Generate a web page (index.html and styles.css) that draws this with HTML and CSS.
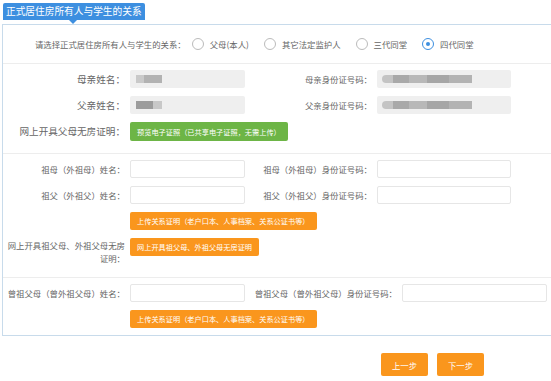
FILE: index.html
```html
<!DOCTYPE html>
<html lang="zh-CN">
<head>
    <meta charset="UTF-8">
    <meta name="viewport" content="width=device-width, initial-scale=1.0">
    <title>正式居住房所有人与学生的关系</title>
    <link rel="stylesheet" href="styles.css">
</head>
<body>
    <div class="page">
        <!-- Title tab -->
        <div class="tab">正式居住房所有人与学生的关系</div>

        <div class="panel">
            <!-- Relation choice -->
            <div class="radio-row">
                <span class="radio-label">请选择正式居住房所有人与学生的关系：</span>
                <label class="radio"><span class="dot"></span>父母(本人)</label>
                <label class="radio"><span class="dot"></span>其它法定监护人</label>
                <label class="radio"><span class="dot"></span>三代同堂</label>
                <label class="radio checked"><span class="dot"></span>四代同堂</label>
            </div>

            <!-- Parents -->
            <div class="section grid">
                <div class="label big">母亲姓名：</div>
                <div class="field filled"><span class="blur name"></span></div>
                <div class="label">母亲身份证号码：</div>
                <div class="field filled"><span class="blur idno"></span></div>

                <div class="label big">父亲姓名：</div>
                <div class="field filled"><span class="blur name dark"></span></div>
                <div class="label">父亲身份证号码：</div>
                <div class="field filled"><span class="blur idno"></span></div>

                <div class="label big">网上开具父母无房证明：</div>
                <div class="wide"><button class="btn green">预览电子证照（已共享电子证照，无需上传）</button></div>
            </div>

            <!-- Grandparents -->
            <div class="section grid">
                <div class="label">祖母（外祖母）姓名：</div>
                <div class="field"></div>
                <div class="label">祖母（外祖母）身份证号码：</div>
                <div class="field"></div>

                <div class="label">祖父（外祖父）姓名：</div>
                <div class="field"></div>
                <div class="label">祖父（外祖父）身份证号码：</div>
                <div class="field"></div>

                <div class="label"></div>
                <div class="wide"><button class="btn orange">上传关系证明（老户口本、人事档案、关系公证书等）</button></div>

                <div class="label multi">网上开具祖父母、外祖父母无房证明：</div>
                <div class="wide"><button class="btn orange">网上开具祖父母、外祖父母无房证明</button></div>
            </div>

            <!-- Great grandparents -->
            <div class="section grid last">
                <div class="label">曾祖父母（曾外祖父母）姓名：</div>
                <div class="field"></div>
                <div class="label">曾祖父母（曾外祖父母）身份证号码：</div>
                <div class="field"></div>

                <div class="label"></div>
                <div class="wide"><button class="btn orange">上传关系证明（老户口本、人事档案、关系公证书等）</button></div>
            </div>
        </div>

        <div class="steps">
            <button class="btn orange step">上一步</button>
            <button class="btn orange step">下一步</button>
        </div>
    </div>
</body>
</html>
```

FILE: styles.css
```css
html, body {
    margin: 0;
    overflow: hidden;
    background-color: #fff;
}
body {
    font-family: "Microsoft YaHei", "Noto Sans CJK SC", sans-serif;
    font-size: 8.4px;
    color: #666;
}
.page {
    padding: 3px 0 0 2px;
}
.tab {
    position: relative;
    display: inline-block;
    height: 17px;
    line-height: 17px;
    padding: 0 3px;
    margin-left: 1px;
    background-color: #3d8fe0;
    color: #fff;
    font-size: 9.7px;
    border-radius: 2px 2px 0 0;
}
.tab::after {
    content: "";
    position: absolute;
    left: 66px;
    top: 17px;
    border-left: 4px solid transparent;
    border-right: 4px solid transparent;
    border-top: 4px solid #3d8fe0;
}
.panel {
    margin-top: 4px;
    width: 570px;
    border: 1px solid #c8dbeb;
}
.radio-row {
    display: flex;
    align-items: center;
    height: 38px;
    padding-left: 32px;
    border-bottom: 1px solid #ededed;
}
.radio-label {
    margin-right: 6px;
}
.radio {
    display: flex;
    align-items: center;
    margin-right: 15px;
}
.dot {
    width: 10px;
    height: 10px;
    margin-right: 6px;
    border: 1px solid #bbb;
    border-radius: 50%;
    display: flex;
    align-items: center;
    justify-content: center;
}
.radio.checked .dot {
    border-color: #3d8fe0;
}
.radio.checked .dot::before {
    content: "";
    width: 4px;
    height: 4px;
    border-radius: 50%;
    background-color: #3d8fe0;
}
.section {
    border-bottom: 1px solid #ededed;
}
.grid {
    display: grid;
    grid-template-columns: 122px 115px 122px 134px;
    column-gap: 5px;
    row-gap: 8px;
    padding: 6px 0 12px 0;
    align-items: start;
}
.section.last {
    grid-template-columns: 122px 115px 147px 145px;
    padding-bottom: 7px;
    border-bottom: none;
}
.label {
    text-align: right;
    line-height: 18px;
    white-space: nowrap;
}
.label.big {
    font-size: 9.6px;
}
.label.multi {
    white-space: normal;
    line-height: 13px;
    padding-left: 4px;
    margin-top: 1px;
}
.field {
    height: 16px;
    border: 1px solid #e6e6e6;
    border-radius: 2px;
    background-color: #fff;
    display: flex;
    align-items: center;
}
.field.filled {
    height: 18px;
    border: none;
    background-color: #efefef;
}
.blur {
    height: 8px;
    margin-left: 6px;
    filter: blur(0.6px);
}
.blur.name {
    width: 26px;
    background: linear-gradient(90deg, #c9c9c9 0 30%, #b2b2b2 30% 100%);
}
.blur.name.dark {
    background: linear-gradient(90deg, #9c9c9c 0 65%, #c8c8c8 65% 100%);
}
.blur.idno {
    width: 90px;
    margin-left: 5px;
    border-radius: 4px 0 0 4px;
    background: linear-gradient(90deg, #c4c4c4 0 12%, #a9a9a9 12% 30%, #b8b8b8 30% 50%, #a6a6a6 50% 75%, #b3b3b3 75% 100%);
}
.wide {
    grid-column: 2 / 5;
    display: flex;
}
.btn {
    border: none;
    border-radius: 2px;
    color: #fff;
    font-family: inherit;
    font-size: 7.2px;
    height: 18px;
    padding: 0 7px;
    cursor: pointer;
}
.btn.green {
    background-color: #6db546;
    height: 19px;
}
.btn.orange {
    background-color: #fa961d;
}
.steps {
    display: flex;
    gap: 9px;
    padding: 17px 0 0 379px;
}
.btn.step {
    width: 47px;
    height: 23px;
    font-size: 8.4px;
    padding: 0;
}
```
